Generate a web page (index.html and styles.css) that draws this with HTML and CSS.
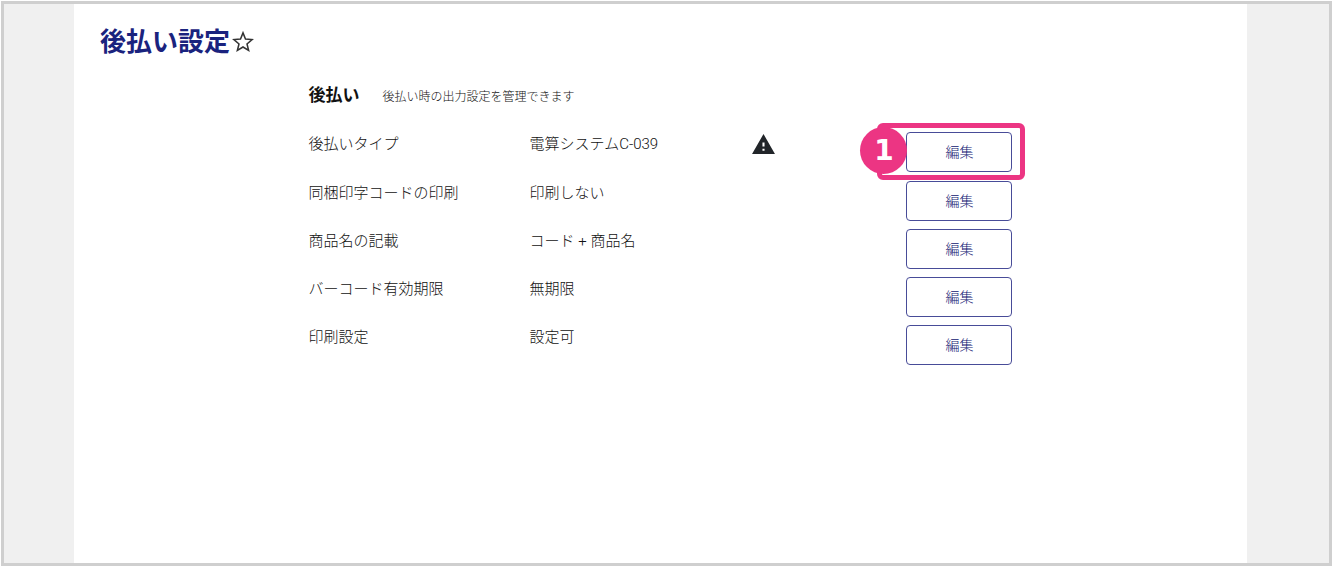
FILE: index.html
```
<!DOCTYPE html>
<html lang="ja">
  <head>
    <meta charset="UTF-8" />
    <meta name="viewport" content="width=device-width, initial-scale=1.0" />
    <title>後払い設定</title>
    <link rel="stylesheet" href="styles.css">
  </head>
  <body>
    <div class="frame">
      <main class="page">
        <div class="page-head">
          <h1>後払い設定</h1>
          <svg class="star" viewBox="0 0 24 24">
            <path d="M12 3.600l2.300 5.700 6.100.5-4.700 4 1.500 6L12 16.600l-5.200 3.200 1.500-6-4.700-4 6.100-.5z" />
          </svg>
        </div>
        <section class="settings">
          <div class="settings-head">
            <h2>後払い</h2>
            <p>後払い時の出力設定を管理できます</p>
          </div>
          <table>
            <tr>
              <th scope="row">後払いタイプ</th>
              <td class="value">電算システムC-039</td>
              <td class="state">
                <svg class="warning" viewBox="0 0 24 24">
                  <path d="M1 21h22L12 2 1 21zm12-3h-2v-2h2v2zm0-4h-2v-4h2v4z" />
                </svg>
              </td>
              <td class="action">
                <button type="button" class="btn">編集</button>
                <div class="highlight"><span class="step">1</span></div>
              </td>
            </tr>
            <tr>
              <th scope="row">同梱印字コードの印刷</th>
              <td class="value">印刷しない</td>
              <td class="state"></td>
              <td class="action"><button type="button" class="btn">編集</button></td>
            </tr>
            <tr>
              <th scope="row">商品名の記載</th>
              <td class="value">コード + 商品名</td>
              <td class="state"></td>
              <td class="action"><button type="button" class="btn">編集</button></td>
            </tr>
            <tr>
              <th scope="row">バーコード有効期限</th>
              <td class="value">無期限</td>
              <td class="state"></td>
              <td class="action"><button type="button" class="btn">編集</button></td>
            </tr>
            <tr>
              <th scope="row">印刷設定</th>
              <td class="value">設定可</td>
              <td class="state"></td>
              <td class="action"><button type="button" class="btn">編集</button></td>
            </tr>
          </table>
        </section>
      </main>
    </div>
  </body>
</html>
```
FILE: styles.css
```
* {
  box-sizing: border-box;
}
body {
  margin: 0;
  padding: 1px;
  font-family: Roboto, "Noto Sans CJK JP", sans-serif;
  font-size: 15px;
  line-height: 24px;
  color: #111;
}
h1,
h2,
p {
  margin: 0;
}
.frame {
  display: flex;
  min-height: calc(100vh - 2px);
  padding: 0 82px 0 70px;
  background-color: #f0f0f0;
  border: 3px solid #cfcfcf;
}
.page {
  flex: 1;
  padding-top: 20px;
  background-color: white;
}
.page-head {
  display: flex;
  align-items: center;
  padding-left: 26px;
}
h1 {
  font-size: 26px;
  line-height: 36px;
  color: #1a237e;
}
.star {
  width: 26px;
  height: 26px;
  fill: none;
  stroke: #333;
  stroke-width: 1.4;
}
.settings {
  width: 60%;
  margin: 22px auto 0;
}
.settings-head {
  display: flex;
  align-items: baseline;
  gap: 23px;
}
h2 {
  font-size: 17px;
  line-height: 26px;
}
.settings-head p {
  font-size: 12px;
  font-weight: 300;
}
table {
  width: 100%;
  margin-top: 23px;
  border-collapse: collapse;
  table-layout: fixed;
}
tr {
  height: 48px;
}
tr:first-child {
  height: 49px;
}
th,
td {
  padding: 0;
  vertical-align: top;
  font-weight: 300;
  text-align: left;
}
th,
.value {
  width: 221px;
}
.action {
  position: relative;
  width: 106px;
}
.warning {
  display: block;
  width: 25px;
  height: 25px;
  fill: #212529;
}
.btn {
  display: block;
  width: 106px;
  height: 40px;
  padding: 0 0 2px;
  font-family: inherit;
  font-size: 14px;
  font-weight: 300;
  color: #0f1670;
  background-color: white;
  border: 1px solid #484c98;
  border-radius: 4px;
}
/* marks the button explained in step 1 */
.highlight {
  position: absolute;
  top: -9px;
  right: -13px;
  width: 148px;
  height: 57px;
  border: 5px solid #ec3583;
  border-radius: 6px;
}
.step {
  position: absolute;
  top: -1px;
  left: -22px;
  width: 47px;
  height: 47px;
  border-radius: 50%;
  background-color: #ec3583;
  color: white;
  font-family: "DejaVu Sans", sans-serif;
  font-size: 28px;
  font-weight: bold;
  line-height: 48px;
  text-align: center;
}
```
